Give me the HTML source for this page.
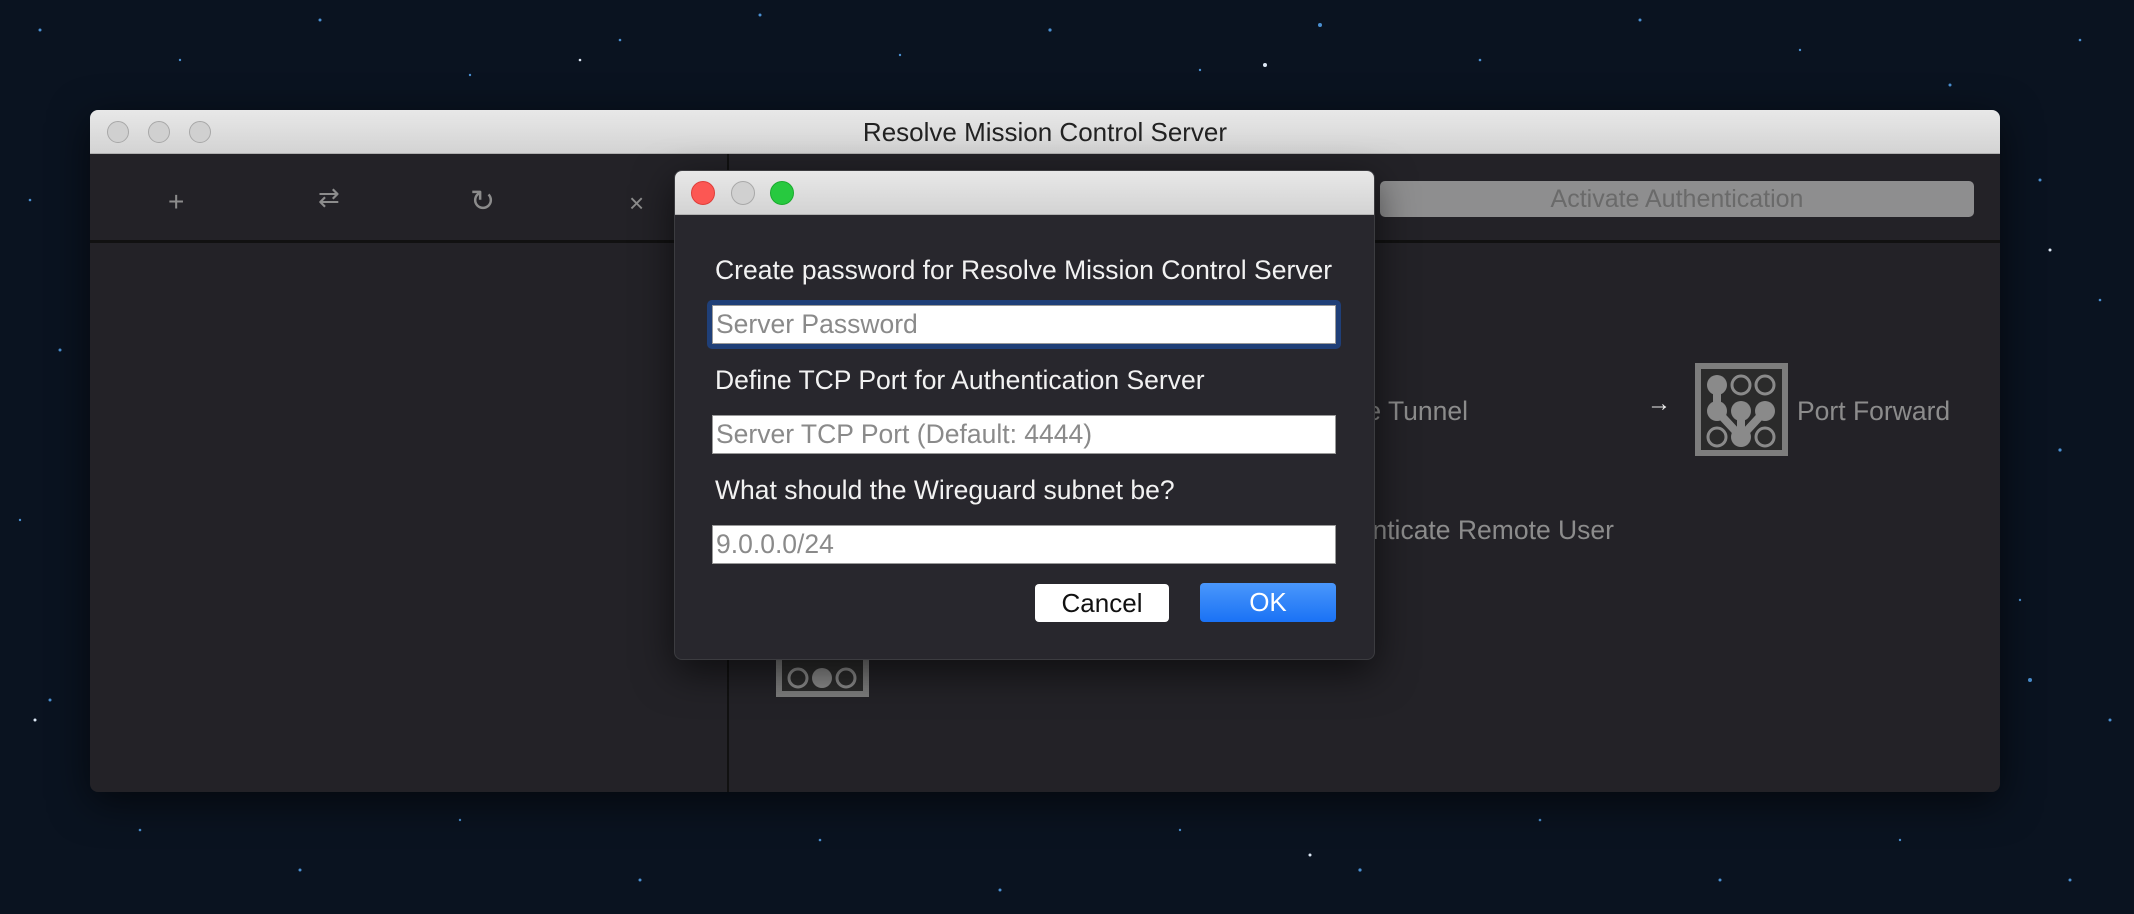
<!DOCTYPE html>
<html><head><meta charset="utf-8"><style>
*{margin:0;padding:0;box-sizing:border-box}
body{width:2134px;height:914px;overflow:hidden;background:#0a1320;font-family:"Liberation Sans",sans-serif;position:relative}
.abs{position:absolute;white-space:nowrap}
.win{left:90px;top:110px;width:1910px;height:682px;background:#232227;border-radius:8px;overflow:hidden;box-shadow:0 10px 40px rgba(0,0,0,.6)}
.tb{left:0;top:0;width:100%;height:44px;background:linear-gradient(#e8e8e8,#d3d3d3);border-bottom:1px solid #b0b0b0}
.tl{width:22px;height:22px;border-radius:50%;background:#d0d0d0;border:1px solid #a8a8a8;top:11px}
.title{left:0;width:100%;top:0;line-height:44px;text-align:center;font-size:26px;color:#222}
.ic{color:#8c8c8c;font-size:28px;top:76px}
.gray{color:#8c8c8c;font-size:26.5px}
.dlg{left:674px;top:170px;width:701px;height:490px;background:#28272d;border-radius:8px;overflow:hidden;box-shadow:0 12px 40px rgba(0,0,0,.6);border:1px solid #3c3c40}
.lbl{color:#f2f2f2;font-size:26.5px;left:40px}
.inp{left:37px;width:624px;height:39px;background:#fff;border:1px solid #999;color:#8a8a8a;font-size:26.5px;padding-left:3px;line-height:37px}
</style></head><body>
<svg class="abs" style="left:0;top:0" width="2134" height="914">
<g fill="#4a8fd0">
<circle cx="40" cy="30" r="1.5"/><circle cx="180" cy="60" r="1.2"/><circle cx="320" cy="20" r="1.5"/><circle cx="470" cy="75" r="1.2"/><circle cx="620" cy="40" r="1.3"/><circle cx="760" cy="15" r="1.5"/><circle cx="900" cy="55" r="1.2"/><circle cx="1050" cy="30" r="1.6"/><circle cx="1200" cy="70" r="1.2"/><circle cx="1320" cy="25" r="2"/><circle cx="1480" cy="60" r="1.3"/><circle cx="1640" cy="20" r="1.5"/><circle cx="1800" cy="50" r="1.2"/><circle cx="1950" cy="85" r="1.5"/><circle cx="2080" cy="40" r="1.3"/>
<circle cx="2040" cy="180" r="1.5"/><circle cx="2100" cy="300" r="1.3"/><circle cx="2060" cy="450" r="1.6"/><circle cx="2020" cy="600" r="1.2"/><circle cx="2110" cy="720" r="1.5"/><circle cx="2030" cy="680" r="2"/>
<circle cx="30" cy="200" r="1.3"/><circle cx="60" cy="350" r="1.5"/><circle cx="20" cy="520" r="1.2"/><circle cx="50" cy="700" r="1.5"/>
<circle cx="140" cy="830" r="1.3"/><circle cx="300" cy="870" r="1.5"/><circle cx="460" cy="820" r="1.2"/><circle cx="640" cy="880" r="1.5"/><circle cx="820" cy="840" r="1.3"/><circle cx="1000" cy="890" r="1.5"/><circle cx="1180" cy="830" r="1.2"/><circle cx="1360" cy="870" r="1.6"/><circle cx="1540" cy="820" r="1.3"/><circle cx="1720" cy="880" r="1.5"/><circle cx="1900" cy="840" r="1.2"/><circle cx="2070" cy="880" r="1.5"/>
</g>
<g fill="#dde8f5"><circle cx="1265" cy="65" r="2"/><circle cx="2050" cy="250" r="1.5"/><circle cx="35" cy="720" r="1.5"/><circle cx="1310" cy="855" r="1.5"/><circle cx="580" cy="60" r="1.3"/></g>
</svg>

<div class="abs win">
  <div class="abs tb"></div>
  <div class="abs tl" style="left:17px"></div><div class="abs tl" style="left:58px"></div><div class="abs tl" style="left:99px"></div>
  <div class="abs title">Resolve Mission Control Server</div>
  <div class="abs" style="left:0;top:130px;width:1910px;height:3px;background:#111"></div>
  <div class="abs" style="left:637px;top:44px;width:2px;height:638px;background:#111"></div>
  <div class="abs ic" style="left:78px">+</div>
  <div class="abs ic" style="left:228px;top:72px;font-size:26px">⇄</div>
  <div class="abs ic" style="left:380px;top:74px;font-size:30px">↻</div>
  <div class="abs ic" style="left:539px;top:78px;font-size:26px">×</div>
  <div class="abs" style="left:1290px;top:71px;width:594px;height:36px;background:#8e8e8f;border-radius:5px;color:#6a6a6a;font-size:25px;text-align:center;line-height:36px">Activate Authentication</div>
  <div class="abs gray" style="left:1000px;top:286px;width:378px;text-align:right">Create Tunnel</div>
  <div class="abs gray" style="left:1000px;top:405px;width:524px;text-align:right">Authenticate Remote User</div>
  <div class="abs" style="left:1557px;top:280px;color:#eee;font-size:24px">→</div>
  <svg class="abs" style="left:1605px;top:253px" width="93" height="93" viewBox="0 0 93 93">
    <rect x="3" y="3" width="87" height="87" fill="#2b2b2b" stroke="#7d7d7d" stroke-width="6"/>
    <path d="M22 22 L22 48 L46 74 L70 48 M46 48 L46 74" stroke="#8a8a8a" stroke-width="8" fill="none"/>
    <g fill="#8a8a8a"><circle cx="22" cy="22" r="10"/><circle cx="22" cy="48" r="10"/><circle cx="46" cy="48" r="10"/><circle cx="70" cy="48" r="10"/><circle cx="46" cy="74" r="10"/></g>
    <g fill="none" stroke="#8a8a8a" stroke-width="3"><circle cx="46" cy="22" r="9"/><circle cx="70" cy="22" r="9"/><circle cx="22" cy="74" r="9"/><circle cx="70" cy="74" r="9"/></g>
  </svg>
  <div class="abs gray" style="left:1707px;top:286px">Port Forward</div>
  <svg class="abs" style="left:686px;top:494px" width="93" height="93" viewBox="0 0 93 93">
    <rect x="3" y="3" width="87" height="87" fill="#2b2b2b" stroke="#7d7d7d" stroke-width="6"/>
    <g fill="#8a8a8a"><circle cx="46" cy="74" r="10"/></g>
    <g fill="none" stroke="#8a8a8a" stroke-width="3"><circle cx="22" cy="74" r="9"/><circle cx="70" cy="74" r="9"/></g>
  </svg>
</div>

<div class="abs dlg">
  <div class="abs tb" style="height:44px"></div>
  <div class="abs tl" style="left:16px;top:10px;width:24px;height:24px;background:#fc5753;border-color:#de3e3a"></div>
  <div class="abs tl" style="left:56px;top:10px;width:24px;height:24px"></div>
  <div class="abs tl" style="left:95px;top:10px;width:24px;height:24px;background:#27c93f;border-color:#1aab2e"></div>
  <div class="abs lbl" style="top:84px">Create password for Resolve Mission Control Server</div>
  <div class="abs" style="left:32px;top:129px;width:634px;height:49px;background:#1f3f78;border-radius:5px"></div>
  <div class="abs inp" style="top:134px">Server Password</div>
  <div class="abs lbl" style="top:194px">Define TCP Port for Authentication Server</div>
  <div class="abs inp" style="top:244px">Server TCP Port (Default: 4444)</div>
  <div class="abs lbl" style="top:304px">What should the Wireguard subnet be?</div>
  <div class="abs inp" style="top:354px">9.0.0.0/24</div>
  <div class="abs" style="left:360px;top:413px;width:134px;height:38px;background:#fff;border-radius:4px;color:#111;font-size:26px;text-align:center;line-height:38px">Cancel</div>
  <div class="abs" style="left:525px;top:412px;width:136px;height:39px;background:linear-gradient(#4a97fb,#1a72f5);border-radius:4px;color:#fff;font-size:26px;text-align:center;line-height:39px">OK</div>
</div>
</body></html>
